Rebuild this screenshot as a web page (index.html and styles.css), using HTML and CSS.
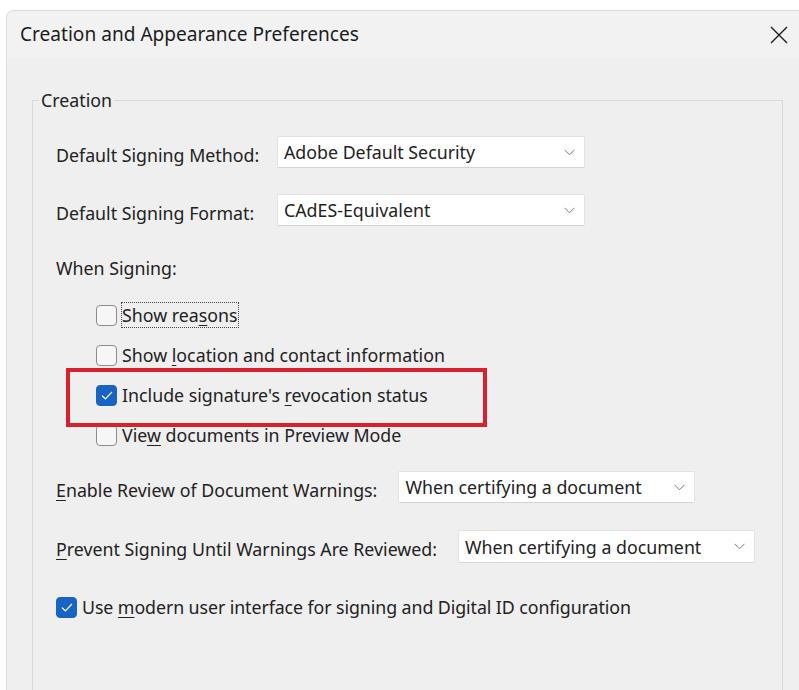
FILE: index.html
```html
<!DOCTYPE html>
<html lang="en">
<head>
<meta charset="utf-8">
<title>Creation and Appearance Preferences</title>
<link rel="stylesheet" href="styles.css">
</head>
<body>
<div class="dialog">
  <div class="titlebar">
    <span class="title">Creation and Appearance Preferences</span>
    <button class="close" aria-label="Close">
      <svg width="18" height="18" viewBox="0 0 18 18"><path d="M1 1 L17 17 M17 1 L1 17" stroke="#1c1c1c" stroke-width="1.4" fill="none"/></svg>
    </button>
  </div>
  <div class="content">
    <fieldset class="group">
      <legend>Creation</legend>

      <div class="row row-method">
        <span class="label fixed">Default Signing Method:</span>
        <div class="select w-sec"><span>Adobe Default Security</span><svg class="chev" width="11" height="7" viewBox="0 0 11 7"><path d="M0.5 0.8 L5.5 5.8 L10.5 0.8" stroke="#7a7a7a" stroke-width="1" fill="none"/></svg></div>
      </div>

      <div class="row row-format">
        <span class="label fixed">Default Signing Format:</span>
        <div class="select w-sec"><span>CAdES-Equivalent</span><svg class="chev" width="11" height="7" viewBox="0 0 11 7"><path d="M0.5 0.8 L5.5 5.8 L10.5 0.8" stroke="#7a7a7a" stroke-width="1" fill="none"/></svg></div>
      </div>

      <div class="heading">When Signing:</div>

      <div class="checks">
        <div class="check"><span class="box"></span><span class="text focus">Show rea<u>s</u>ons</span></div>
        <div class="check"><span class="box"></span><span class="text">Show <u>l</u>ocation and contact information</span></div>
        <div class="check"><span class="box on"><svg width="12" height="9" viewBox="0 0 12 9"><path d="M1 4.6 L4.3 7.8 L11 1" stroke="#fff" stroke-width="1.2" fill="none"/></svg></span><span class="text">Include signature's <u>r</u>evocation status</span></div>
        <div class="check"><span class="box"></span><span class="text">Vie<u>w</u> documents in Preview Mode</span></div>
      </div>

      <div class="row row-enable">
        <span class="label"><u>E</u>nable Review of Document Warnings:</span>
        <div class="select w-warn"><span>When certifying a document</span><svg class="chev" width="11" height="7" viewBox="0 0 11 7"><path d="M0.5 0.8 L5.5 5.8 L10.5 0.8" stroke="#7a7a7a" stroke-width="1" fill="none"/></svg></div>
      </div>

      <div class="row row-prevent">
        <span class="label"><u>P</u>revent Signing Until Warnings Are Reviewed:</span>
        <div class="select w-warn"><span>When certifying a document</span><svg class="chev" width="11" height="7" viewBox="0 0 11 7"><path d="M0.5 0.8 L5.5 5.8 L10.5 0.8" stroke="#7a7a7a" stroke-width="1" fill="none"/></svg></div>
      </div>

      <div class="check modern"><span class="box on"><svg width="12" height="9" viewBox="0 0 12 9"><path d="M1 4.6 L4.3 7.8 L11 1" stroke="#fff" stroke-width="1.2" fill="none"/></svg></span><span class="text">Use <u>m</u>odern user interface for signing and Digital ID configuration</span></div>

      <div class="highlight"></div>
    </fieldset>
  </div>
</div>
</body>
</html>
```

FILE: styles.css
```css
* { box-sizing: border-box; }

html, body {
  margin: 0;
  padding: 0;
  background: #ffffff;
  width: 799px;
  height: 690px;
  overflow: hidden;
}

body {
  font-family: "Noto Sans", "Open Sans", sans-serif;
  color: #222222;
  font-size: 17.8px;
}

.dialog {
  margin: 10px 0 0 6px;
  height: 680px;
  background: #efefef;
  border-top-left-radius: 8px;
  border-left: 1px solid #dcdcdc;
  border-top: 1px solid #dcdcdc;
  display: flex;
  flex-direction: column;
}

.titlebar {
  height: 47px;
  flex: none;
  display: flex;
  align-items: center;
  justify-content: space-between;
  padding: 0 11px 0 13px;
  background: #f2f2f2;
  border-top-left-radius: 8px;
}

.title {
  font-size: 19.1px;
  color: #1c1c1c;
  padding-bottom: 2px;
}

.close {
  border: none;
  background: none;
  padding: 0;
  width: 18px;
  height: 18px;
  display: flex;
}

.content {
  flex: 1;
  padding: 0 16px 0 25px;
}

.group {
  position: relative;
  margin: 30px 0 0 0;
  height: 632px;
  border: 1px solid #d9d9d9;
  padding: 24px 0 0 23px;
  display: flex;
  flex-direction: column;
  align-items: flex-start;
}

.group legend {
  font-size: 17.8px;
  line-height: 24px;
  padding: 0 2px;
  margin-left: -17px;
  color: #222;
}

.row {
  display: flex;
  align-items: center;
  gap: 21px;
  height: 32px;
}

.label {
  padding-top: 5px;
  white-space: nowrap;
}

.label.fixed {
  width: 202px;
}

.row-method,
.row-format { gap: 19px; }

.row-format { margin-top: 26px; }
.row-enable { margin-top: 16px; }
.row-prevent { margin-top: 27px; height: 33px; }

.select {
  height: 100%;
  background: #ffffff;
  border: 1px solid #e2e2e2;
  border-bottom-color: #d4d4d4;
  border-radius: 2px;
  display: flex;
  align-items: center;
  justify-content: space-between;
  padding: 0 9px 0 6px;
  white-space: nowrap;
}

.select .chev { flex: none; }

.w-sec { width: 308px; }
.w-warn { width: 297px; }

.heading {
  margin-top: 30px;
  line-height: 24px;
}

.checks {
  margin-top: 15px;
  padding-left: 40px;
  display: flex;
  flex-direction: column;
}

.check {
  display: flex;
  align-items: center;
  height: 40px;
  gap: 5px;
}

.box {
  width: 21px;
  height: 21px;
  flex: none;
  border: 1px solid #8c8c8c;
  border-radius: 4px;
  background: #f6f6f6;
  display: flex;
  align-items: center;
  justify-content: center;
}

.box.on {
  background: #1864c2;
  border-color: #1864c2;
}

.text {
  white-space: nowrap;
  line-height: 24px;
}

.text.focus {
  outline: 1px dotted #444;
  outline-offset: 0;
}

u {
  text-decoration-thickness: 1px;
  text-underline-offset: 3px;
}

.modern {
  margin-top: 32px;
  height: 24px;
}

.modern .text {
  letter-spacing: -0.08px;
}

.highlight {
  position: absolute;
  left: 33px;
  top: 256px;
  width: 421px;
  height: 59px;
  border: 4px solid #d8212d;
}
```
